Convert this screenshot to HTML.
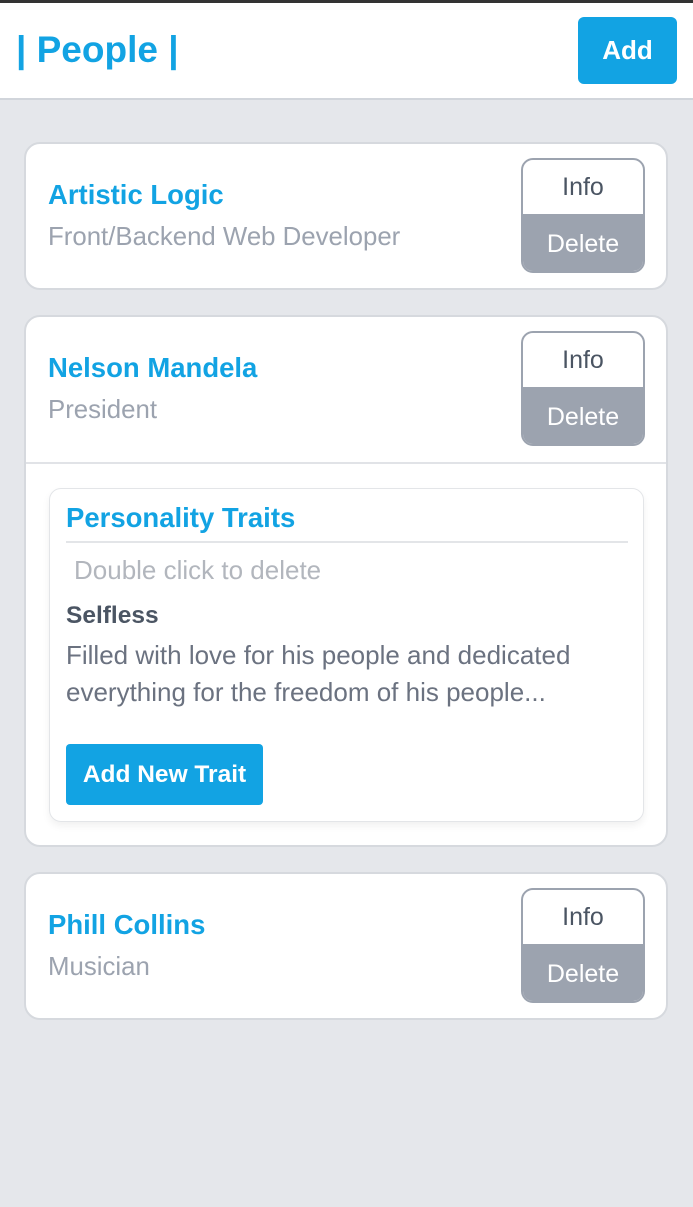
<!DOCTYPE html><html><head><style>
body{margin:0;width:693px;height:1207px;background:#e5e7eb;font-family:"Liberation Sans",sans-serif;position:relative;overflow:hidden}
.a{position:absolute;white-space:nowrap}
.hdr{position:absolute;left:0;top:0;width:693px;height:100px;background:#fff;border-top:3px solid #333;box-sizing:border-box;border-bottom:2px solid #d1d5db}
.blue{color:#12a3e3;font-weight:bold}
.card{position:absolute;left:24px;width:644px;background:#fff;border:2px solid #d6d9de;border-radius:16px;box-sizing:border-box}
.btns{position:absolute;width:124px;height:115px;border:2px solid #9ca3af;border-radius:12px;box-sizing:border-box;overflow:hidden;background:#fff}
.btns div{height:54px;text-align:center;line-height:54px;font-size:25px;color:#4b5563}
.btns .d{height:59px;background:#9ca3af;color:#fff;line-height:60px}
.name{font-size:27.5px}
.sub{font-size:25.8px;color:#9ca3af}
</style></head><body>
<div class="hdr"></div>
<div class="a blue" style="left:16px;top:29px;font-size:37px">| People |</div>
<div class="a" style="left:578px;top:17px;width:99px;height:67px;background:#12a3e3;border-radius:6px;color:#fff;font-weight:bold;font-size:26px;text-align:center;line-height:66px">Add</div>

<div class="card" style="top:142px;height:148px"></div>
<div class="a blue name" style="left:48px;top:179px">Artistic Logic</div>
<div class="a sub" style="left:48px;top:223px">Front/Backend Web Developer</div>
<div class="btns" style="left:521px;top:158px"><div>Info</div><div class="d">Delete</div></div>

<div class="card" style="top:315px;height:532px"></div>
<div class="a" style="left:26px;top:462px;width:640px;height:2px;background:#e1e3e7"></div>
<div class="a blue name" style="left:48px;top:352px">Nelson Mandela</div>
<div class="a sub" style="left:48px;top:396px">President</div>
<div class="btns" style="left:521px;top:331px"><div>Info</div><div class="d">Delete</div></div>
<div class="a" style="left:49px;top:488px;width:595px;height:334px;border:1.5px solid #e3e5e8;border-radius:12px;box-sizing:border-box;box-shadow:0 4px 8px rgba(0,0,0,.06)"></div>
<div class="a blue" style="left:66px;top:502px;font-size:27.5px">Personality Traits</div>
<div class="a" style="left:66px;top:541px;width:562px;height:2px;background:#e3e5e8"></div>
<div class="a" style="left:74px;top:555px;font-size:26px;color:#b2b6bd">Double click to delete</div>
<div class="a" style="left:66px;top:602px;font-size:24.5px;color:#4b5563;font-weight:bold">Selfless</div>
<div class="a" style="left:66px;top:637px;font-size:26px;color:#6b7280;line-height:37px">Filled with love for his people and dedicated<br>everything for the freedom of his people...</div>
<div class="a" style="left:66px;top:744px;width:197px;height:61px;background:#12a3e3;border-radius:4px;color:#fff;font-weight:bold;font-size:24.5px;text-align:center;line-height:61px">Add New Trait</div>

<div class="card" style="top:872px;height:148px"></div>
<div class="a blue name" style="left:48px;top:909px">Phill Collins</div>
<div class="a sub" style="left:48px;top:953px">Musician</div>
<div class="btns" style="left:521px;top:888px"><div>Info</div><div class="d">Delete</div></div>
</body></html>
